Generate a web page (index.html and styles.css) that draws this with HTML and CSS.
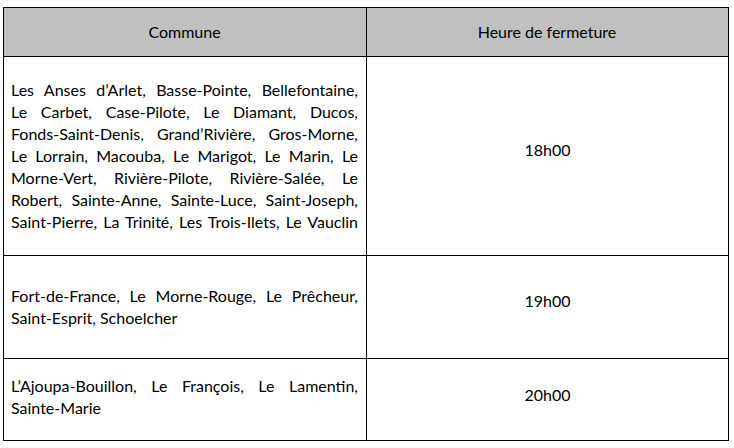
FILE: index.html
```html
<!DOCTYPE html>
<html lang="fr">
<head>
<meta charset="utf-8">
<title>Heures de fermeture</title>
<link rel="stylesheet" href="styles.css">
</head>
<body>
<table class="hours">
  <colgroup>
    <col class="col-commune">
    <col class="col-heure">
  </colgroup>
  <thead>
    <tr>
      <th class="head">Commune</th>
      <th class="head">Heure de fermeture</th>
    </tr>
  </thead>
  <tbody>
    <tr class="row-1">
      <td class="communes">
        <span class="line">Les Anses d’Arlet, Basse-Pointe, Bellefontaine,</span>
        <span class="line">Le Carbet, Case-Pilote, Le Diamant, Ducos,</span>
        <span class="line">Fonds-Saint-Denis, Grand’Rivière, Gros-Morne,</span>
        <span class="line">Le Lorrain, Macouba, Le Marigot, Le Marin, Le</span>
        <span class="line">Morne-Vert, Rivière-Pilote, Rivière-Salée, Le</span>
        <span class="line">Robert, Sainte-Anne, Sainte-Luce, Saint-Joseph,</span>
        <span class="line">Saint-Pierre, La Trinité, Les Trois-Ilets, Le Vauclin</span>
      </td>
      <td class="heure">18h00</td>
    </tr>
    <tr class="row-2">
      <td class="communes">
        <span class="line">Fort-de-France, Le Morne-Rouge, Le Prêcheur,</span>
        <span class="line last">Saint-Esprit, Schoelcher</span>
      </td>
      <td class="heure">19h00</td>
    </tr>
    <tr class="row-3">
      <td class="communes">
        <span class="line">L’Ajoupa-Bouillon, Le François, Le Lamentin,</span>
        <span class="line last">Sainte-Marie</span>
      </td>
      <td class="heure">20h00</td>
    </tr>
  </tbody>
</table>
</body>
</html>
```

FILE: styles.css
```css
html, body {
  margin: 0;
  padding: 0;
  background: #ffffff;
}

body {
  padding: 7px 0 0 3px;
  font-family: Lato, "Open Sans", "Liberation Sans", sans-serif;
  font-size: 16px;
  line-height: 22px;
  color: #000000;
}

.hours {
  border-collapse: separate;
  border-spacing: 0;
  table-layout: fixed;
  width: 726px;
  border-top: 1px solid #000;
  border-left: 1px solid #000;
}

.col-commune { width: 363px; }
.col-heure { width: 362px; }

.hours th,
.hours td {
  border-right: 1px solid #000;
  border-bottom: 1px solid #000;
  vertical-align: top;
  box-sizing: border-box;
}

.head {
  background: #c0c0c0;
  font-weight: normal;
  text-align: center;
  padding: 13px 8px 13px 7px;
  height: 49px;
}

.communes {
  padding: 0 8px 0 7px;
  text-align: left;
}

.line {
  display: block;
  text-align: justify;
  text-align-last: justify;
  white-space: nowrap;
}

.line.last {
  text-align: left;
  text-align-last: left;
}

.heure {
  text-align: center;
  padding: 0 8px;
}

.row-1 td { height: 199px; }
.row-1 .communes { padding-top: 22px; }
.row-1 .heure { padding-top: 82px; }

.row-2 td { height: 103px; }
.row-2 .communes { padding-top: 29px; }
.row-2 .heure { padding-top: 34px; }

.row-3 td { height: 82px; }
.row-3 .communes { padding-top: 16px; }
.row-3 .heure { padding-top: 25px; }
```
